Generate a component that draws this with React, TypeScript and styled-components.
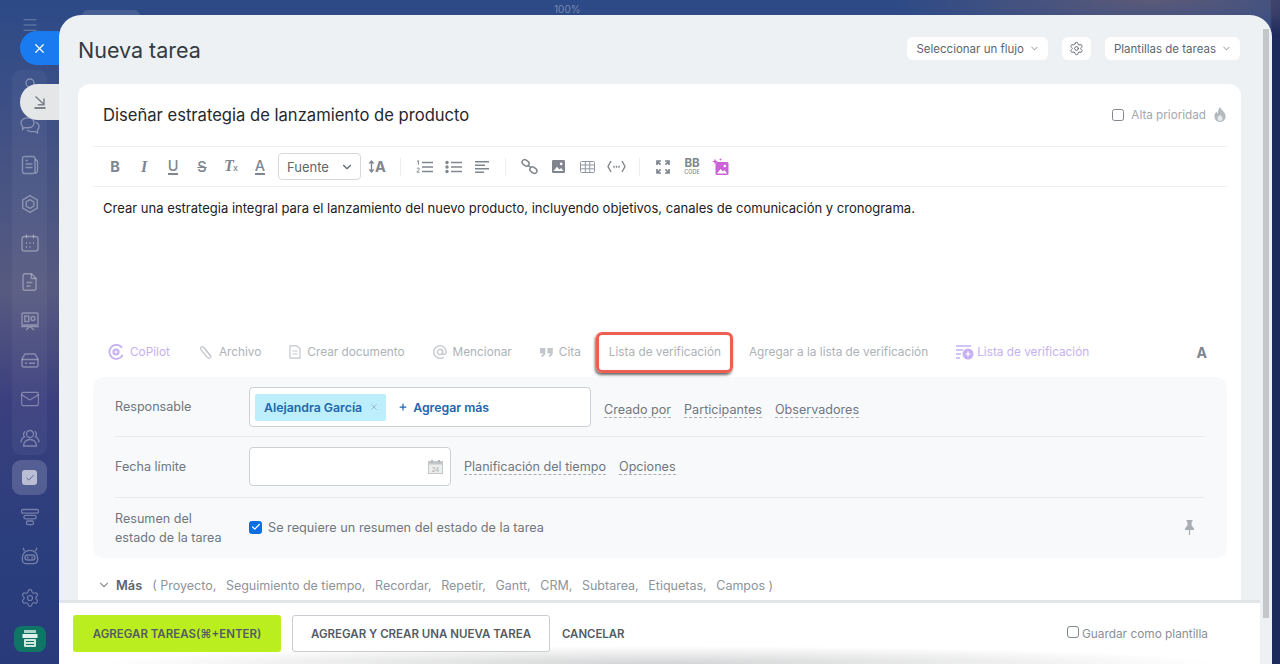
import React from "react";
import styled, { createGlobalStyle, css } from "styled-components";
import { Check, ChevronDown, Mail, Menu, Plus, Settings, X } from "lucide-react";

const GlobalStyle = createGlobalStyle`
  html, body { margin: 0; padding: 0; height: 100%; overflow: hidden; }
  body { font-family: Inter, "Liberation Sans", sans-serif; -webkit-font-smoothing: antialiased; }
  * { box-sizing: border-box; }
`;

const Page = styled.div`
  display: flex;
  width: 1280px;
  height: 664px;
  overflow: hidden;
  background:
    radial-gradient(ellipse 260px 40px at 1150px 0, #5c5a78, transparent),
    linear-gradient(to right, transparent 1270px, #1d2a5c 1272px),
    linear-gradient(#2c4a87 0, #3f5085 120px, #575a80 290px, #3b3f7e 400px, #2b3e7d 540px, #283a7a 664px);
`;

const Sidebar = styled.nav`
  position: relative;
  flex: none;
  display: flex;
  flex-direction: column;
  align-items: center;
  width: 59px;
  padding: 19px 12px 0;
  color: rgba(255, 255, 255, 0.34);
`;

const Burger = styled.div`
  display: flex;
  height: 12px;
  align-items: center;
  margin-bottom: 39px;
`;

const NavGroup = styled.div`
  display: flex;
  flex-direction: column;
  align-items: center;
  gap: 19px;
  width: 35px;
  padding: 7px 0;
  border-radius: 9px;
  background: rgba(255, 255, 255, 0.045);
`;

const NavIcon = styled.div<{ $top?: number }>`
  display: flex;
  align-items: center;
  justify-content: center;
  height: 20px;
  margin-top: ${({ $top }) => $top ?? 0}px;
`;

const ActiveTile = styled.div`
  display: flex;
  align-items: center;
  justify-content: center;
  width: 35px;
  height: 35px;
  margin-top: 5px;
  border-radius: 9px;
  background: rgba(255, 255, 255, 0.17);
`;

const TaskMark = styled.div`
  display: flex;
  align-items: center;
  justify-content: center;
  width: 15px;
  height: 15px;
  border-radius: 3px;
  background: rgba(255, 255, 255, 0.6);
  color: #4b5788;
`;

const AppBadge = styled.div`
  display: flex;
  align-items: center;
  justify-content: center;
  width: 32px;
  height: 26px;
  margin-top: 18px;
  border-radius: 8px;
  background: #0f7565;
`;

const SideTab = styled.div<{ $kind: "close" | "collapse" }>`
  position: absolute;
  left: 20px;
  width: 39px;
  display: flex;
  align-items: center;
  padding-left: 12px;
  border-radius: 18px 0 0 18px;
  ${({ $kind }) =>
    $kind === "close"
      ? css`
          top: 31px;
          height: 34px;
          background: #1a7af0;
          color: #fff;
        `
      : css`
          top: 84px;
          height: 36px;
          background: #e4e6e8;
          color: #7d8389;
        `}
`;

const Main = styled.div`
  flex: 1;
  display: flex;
  flex-direction: column;
  min-width: 0;
  padding-right: 8px;
`;

const TopStrip = styled.div`
  flex: none;
  height: 15px;
  display: flex;
  overflow: hidden;
`;

const GhostTab = styled.div`
  width: 58px;
  height: 10px;
  margin: 10px 0 0 23px;
  border-radius: 6px 6px 0 0;
  background: rgba(255, 255, 255, 0.12);
`;

const Zoom = styled.div`
  margin: 3px 0 0 414px;
  font-size: 10px;
  line-height: 12px;
  color: rgba(255, 255, 255, 0.35);
`;

const Panel = styled.section`
  position: relative;
  flex: 1;
  min-height: 0;
  display: flex;
  flex-direction: column;
  overflow: hidden;
  border-radius: 22px 22px 0 0;
  background: #eef1f4;
`;

const Scrollbar = styled.div`
  position: absolute;
  top: 14px;
  right: 3px;
  width: 6px;
  height: 589px;
  background: #c3c7ca;
`;

const Header = styled.header`
  flex: none;
  height: 69px;
  display: flex;
  align-items: flex-start;
  padding: 22px 32px 0 19px;
`;

const Title = styled.h1`
  flex: 1;
  margin: 0;
  font-size: 21.5px;
  line-height: 26px;
  font-weight: 400;
  color: #333a42;
`;

const HeaderActions = styled.div`
  display: flex;
  gap: 14px;
`;

const Chip = styled.button`
  display: flex;
  align-items: center;
  gap: 5px;
  height: 23px;
  padding: 0 8px 0 9px;
  border: 0;
  border-radius: 6px;
  background: #fff;
  font: inherit;
  font-size: 11.5px;
  color: #5d6670;
`;

const GearChip = styled(Chip)`
  width: 29px;
  padding: 0;
  justify-content: center;
`;

const Body = styled.div`
  flex: 1;
  min-height: 0;
  padding: 0 31px 0 19px;
  overflow: hidden;
`;

const Card = styled.div`
  height: 600px;
  padding: 0 14px 0 15px;
  border-radius: 12px 12px 0 0;
  background: #fff;
`;

const TitleRow = styled.div`
  display: flex;
  align-items: center;
  height: 63px;
  padding: 0 1px 1px 10px;
  border-bottom: 1px solid #edeff1;
`;

const TaskTitle = styled.div`
  flex: 1;
  font-size: 16.6px;
  color: #26292d;
`;

const Priority = styled.label`
  display: flex;
  align-items: center;
  font-size: 11.7px;
  color: #a2a8ae;
`;

const Box = styled.span<{ $checked?: boolean; $size?: number }>`
  flex: none;
  display: inline-flex;
  align-items: center;
  justify-content: center;
  width: ${({ $size }) => $size ?? 12}px;
  height: ${({ $size }) => $size ?? 12}px;
  border-radius: 2.5px;
  border: 1px solid ${({ $checked }) => ($checked ? "#0b6fe0" : "#80868c")};
  background: ${({ $checked }) => ($checked ? "#0b6fe0" : "#fff")};
  color: #fff;
`;

const PriorityText = styled.span`
  margin: 0 8px 0 7px;
`;

const Toolbar = styled.div`
  display: flex;
  align-items: center;
  height: 40px;
  padding-left: 7.5px;
  border-bottom: 1px solid #edeff1;
`;

const Tool = styled.div`
  flex: none;
  display: flex;
  align-items: center;
  justify-content: center;
  width: 29px;
  height: 24px;
  color: #7f868d;
`;

const Glyph = styled.span<{ $italic?: boolean; $under?: boolean; $light?: boolean }>`
  font-size: ${({ $italic }) => ($italic ? 16 : 14.5)}px;
  line-height: 15px;
  font-weight: ${({ $light }) => ($light ? 500 : 700)};
  font-style: ${({ $italic }) => ($italic ? "italic" : "normal")};
  font-family: ${({ $italic }) => ($italic ? '"Liberation Serif", serif' : "inherit")};
  border-bottom: ${({ $under }) => ($under ? "2px solid #7f868d" : "0")};
`;

const Struck = styled(Glyph)`
  text-decoration: line-through;
`;

const Sub = styled.span`
  font-size: 9px;
  font-family: Inter, sans-serif;
  font-style: normal;
  font-weight: 500;
  margin-left: -1px;
`;

const FontSelect = styled.div`
  flex: none;
  display: flex;
  align-items: center;
  justify-content: space-between;
  width: 83px;
  height: 27px;
  margin-left: 3.5px;
  margin-right: 1.5px;
  padding: 0 6px 0 8px;
  border: 1px solid #d5d9dd;
  border-radius: 4px;
  font-size: 13px;
  color: #5f666d;
`;

const ToolDivider = styled.div`
  flex: none;
  width: 1px;
  height: 18px;
  margin: 0 8.5px;
  background: #eceef0;
`;

const BBCode = styled.div`
  display: flex;
  flex-direction: column;
  align-items: center;
  font-size: 11.5px;
  line-height: 11px;
  font-weight: 700;
  color: #7f868d;
`;

const BBSmall = styled.span`
  font-size: 5.5px;
  line-height: 7px;
  font-weight: 500;
`;

const Editor = styled.p`
  height: 140px;
  margin: 0;
  padding: 13px 10px 0;
  font-size: 13.03px;
  line-height: 16px;
  color: #1d2024;
`;

const Actions = styled.div`
  display: flex;
  align-items: center;
  gap: 28px;
  height: 50px;
  padding: 0 20px 0 15px;
  font-size: 11.8px;
  color: #adb2b7;
`;

const Action = styled.div<{ $purple?: boolean; $marked?: boolean; $gap?: number }>`
  position: relative;
  display: flex;
  align-items: center;
  gap: ${({ $gap }) => $gap ?? 6}px;
  white-space: nowrap;
  color: ${({ $purple }) => ($purple ? "#c6b0f2" : "#adb2b7")};
  ${({ $marked }) =>
    $marked &&
    css`
      &::after {
        content: "";
        position: absolute;
        inset: -13px -12px -14px -13px;
        border: 3.5px solid #ee5f53;
        border-radius: 6px;
        box-shadow: -1px 2px 3px rgba(0, 0, 0, 0.6), inset 0 0 1px rgba(0, 0, 0, 0.2);
      }
    `}
`;

const FontToggle = styled.div`
  margin-left: auto;
  font-size: 14px;
  font-weight: 700;
  color: #7f868d;
`;

const Fields = styled.div`
  display: flex;
  flex-direction: column;
  height: 181px;
  padding: 0 23px 0 22px;
  border-radius: 10px;
  background: #f8f9fb;
  font-size: 12.6px;
  color: #6f777f;
`;

const FieldRow = styled.div<{ $height: number; $top: number }>`
  display: flex;
  align-items: flex-start;
  height: ${({ $height }) => $height}px;
  padding-top: ${({ $top }) => $top}px;
  border-bottom: 1px solid #e8eaec;
  &:last-child {
    border-bottom: 0;
  }
`;

const FieldLabel = styled.div<{ $tall?: boolean }>`
  flex: none;
  width: 134px;
  padding-top: ${({ $tall }) => ($tall ? 1 : 0)}px;
  line-height: ${({ $tall }) => ($tall ? "19px" : "40px")};
`;

const InputBox = styled.div<{ $wide?: boolean }>`
  flex: none;
  display: flex;
  align-items: center;
  justify-content: ${({ $wide }) => ($wide ? "flex-start" : "flex-end")};
  width: ${({ $wide }) => ($wide ? 342 : 202)}px;
  height: ${({ $wide }) => ($wide ? 40 : 39)}px;
  padding: 0 7px 0 5px;
  border: 1px solid #ccd1d6;
  border-radius: 4px;
  background: #fff;
`;

const Person = styled.div`
  display: flex;
  align-items: center;
  gap: 7px;
  height: 27px;
  padding: 0 7px 0 9px;
  border-radius: 2px;
  background: #bdeefb;
  font-weight: 600;
  font-size: 12.3px;
  color: #2067ad;
`;

const AddMore = styled.div`
  display: flex;
  align-items: center;
  gap: 5px;
  margin-left: 12px;
  font-weight: 600;
  font-size: 12.3px;
  color: #2067ad;
`;

const FieldLinks = styled.div<{ $top: number }>`
  display: flex;
  gap: 13px;
  margin: ${({ $top }) => $top}px 0 0 13px;
`;

const DashLink = styled.span`
  line-height: 15px;
  border-bottom: 1px dashed #a9aeb4;
  white-space: nowrap;
`;

const SummaryCheck = styled.div`
  flex: 1;
  display: flex;
  align-items: center;
  gap: 6px;
  height: 38px;
  padding-right: 10px;
`;

const SummaryText = styled.span`
  flex: 1;
  font-size: 12.7px;
`;

const More = styled.div`
  display: flex;
  align-items: center;
  height: 54px;
  padding-left: 4px;
  font-size: 12.5px;
  color: #8d949b;
`;

const MoreLabel = styled.b`
  margin: 0 10px 0 5px;
  font-size: 12.8px;
  font-weight: 600;
  color: #5d656d;
`;

const MoreItem = styled.span`
  margin-right: 9.6px;
`;

const Footer = styled.footer`
  flex: none;
  display: flex;
  align-items: center;
  height: 64px;
  margin-right: 12px;
  padding: 0 52px 0 14px;
  border-top: 3px solid #e2e5e7;
  background: radial-gradient(ellipse 560px 18px at 50% 100%, #d3d4d5, #fff);
`;

const FooterButton = styled.button<{ $primary?: boolean }>`
  display: flex;
  align-items: center;
  justify-content: center;
  height: 37px;
  width: ${({ $primary }) => ($primary ? 208 : 258)}px;
  margin-right: 11px;
  border: ${({ $primary }) => ($primary ? "0" : "1px solid #c9cdd1")};
  border-radius: 3px;
  background: ${({ $primary }) => ($primary ? "#bbee1e" : "#fff")};
  font: inherit;
  font-size: 11.5px;
  font-weight: 600;
  color: #535c64;
`;

const CancelLink = styled.span`
  margin-left: 1px;
  font-size: 11.4px;
  font-weight: 600;
  color: #535c64;
`;

const SaveTemplate = styled.label`
  display: flex;
  align-items: center;
  gap: 3px;
  margin-left: auto;
  font-size: 11.85px;
  color: #888f96;
  ${Box} {
    margin-top: -4px;
    border-radius: 3px;
  }
`;

const Ghost = () => (
  <svg width="20" height="20" viewBox="0 0 20 20" fill="none" stroke="currentColor" strokeWidth="1.4">
    <circle cx="10" cy="6" r="4" />
    <path d="M4 18c0-4 2-7 6-7s6 3 6 7z" />
  </svg>
);

const Chat = () => (
  <svg width="20" height="20" viewBox="0 0 20 20" fill="none" stroke="currentColor" strokeWidth="1.4">
    <path d="M8 1.8c3.5 0 6 2.2 6 5s-2.5 5-6 5H4l-1.4 1.6v-3C1.5 9.4 1 8.2 1 6.8c0-2.8 3-5 7-5z" />
    <path d="M15.4 6.2c2.1.7 3.6 2.4 3.6 4.4 0 1.3-.5 2.3-1.5 3.2v3.2l-2.1-1.4H11c-1.5 0-2.8-.6-3.7-1.5" />
  </svg>
);

const Feed = () => (
  <svg width="20" height="20" viewBox="0 0 20 20" fill="none" stroke="currentColor" strokeWidth="1.4">
    <rect x="2.5" y="1.5" width="12.5" height="17" rx="2" />
    <path d="M15 4.5c1.5.3 2.5 1 2.500 2.500v8.500c0 1.500-1 2.500-2.500 2.700" />
    <path d="M5.500 5.500h2.500M5.500 9h7M5.500 12.500h7" strokeWidth="1.5" />
  </svg>
);

const Hexagon = () => (
  <svg width="20" height="20" viewBox="0 0 20 20" fill="none" stroke="currentColor" strokeWidth="1.4">
    <path d="M10 1.6 17.3 5.8v8.4L10 18.4 2.7 14.2V5.8z" />
    <path d="M10 5.6 13.8 7.8v4.4L10 14.4 6.2 12.2V7.8z" />
  </svg>
);

const CalendarDots = () => (
  <svg width="20" height="20" viewBox="0 0 20 20" fill="none" stroke="currentColor" strokeWidth="1.4">
    <rect x="2" y="3.5" width="16" height="14.5" rx="2.5" />
    <path d="M6.5 1.5v4M13.5 1.5v4" />
    <path d="M6 10h1M9.500 10h1M13 10h1M6 14h1M9.500 14h1" strokeWidth="1.8" />
  </svg>
);

const PageIcon = () => (
  <svg width="20" height="20" viewBox="0 0 20 20" fill="none" stroke="currentColor" strokeWidth="1.4">
    <path d="M5 1.8h6.5L16 6.300v10a2 2 0 0 1-2 2H5a2 2 0 0 1-2-2V3.800a2 2 0 0 1 2-2z" />
    <path d="M11.300 2v4.500H16M6.500 10.500h6M6.500 14h4" />
  </svg>
);

const Board = () => (
  <svg width="20" height="20" viewBox="0 0 20 20" fill="none" stroke="currentColor" strokeWidth="1.4">
    <rect x="2" y="2" width="16" height="12" rx="1" />
    <rect x="4.8" y="5" width="4" height="5.5" />
    <circle cx="13" cy="7.5" r="2" />
    <path d="M1 15.500h18M10 15.500l-4 3.500M10 15.500l4 3.500" />
  </svg>
);

const Drive = () => (
  <svg width="20" height="18" viewBox="0 0 20 18" fill="none" stroke="currentColor" strokeWidth="1.4">
    <path d="M5 3h10l3 5v6a2 2 0 0 1-2 2H4a2 2 0 0 1-2-2V8z" />
    <path d="M2 8.5h16M5 12.2h2M9 12.2h6" />
  </svg>
);

const Team = () => (
  <svg width="20" height="20" viewBox="0 0 20 20" fill="none" stroke="currentColor" strokeWidth="1.3">
    <circle cx="10" cy="6" r="3.5" />
    <path d="M3.5 18c0-3.800 2.800-6.500 6.500-6.500s6.500 2.700 6.500 6.500z" />
    <path d="M5.300 3.500C3.500 4 2.800 7 4.500 8.800 2.300 9.800 1 12 1 14.500M14.700 3.500c1.800.5 2.500 3.500.8 5.300 2.200 1 3.500 3.200 3.500 5.700" />
  </svg>
);

const Funnel = () => (
  <svg width="20" height="18" viewBox="0 0 20 18" fill="none" stroke="currentColor" strokeWidth="1.3">
    <rect x="1.5" y="1.5" width="17" height="3.6" rx="1.4" />
    <rect x="4" y="7.3" width="12" height="3.6" rx="1.4" />
    <rect x="6.5" y="13" width="7" height="3.6" rx="1.4" />
  </svg>
);

const BotFace = () => (
  <svg width="20" height="20" viewBox="0 0 20 20" fill="none" stroke="currentColor" strokeWidth="1.4">
    <path d="M4.500 5 3 1.800M15.500 5 17 1.800" />
    <path d="M10 4.400c4.600 0 7.600 3 7.600 7V14a3.600 3.600 0 0 1-3.600 3.600H6A3.600 3.600 0 0 1 2.400 14v-2.600c0-4 3-7 7.600-7z" />
    <rect x="5" y="9" width="10" height="5" rx="2.5" />
    <path d="M7.800 11.500h.1M12.100 11.500h.1" strokeWidth="1.8" strokeLinecap="round" />
  </svg>
);

const Collapse = () => (
  <svg width="16" height="16" viewBox="0 0 16 16" fill="none" stroke="currentColor" strokeWidth="1.5">
    <path d="M3.500 2.500 12 10.500M12 4.500v6.200H5.800" />
    <path d="M2.500 14h11" strokeWidth="2" />
  </svg>
);

const StoreBadge = () => (
  <svg width="18" height="20" viewBox="0 0 18 20">
    <rect x="3" y="1" width="12" height="3" fill="#a9d6ca" />
    <rect x="1.5" y="5" width="15" height="4" fill="#e4f2ee" />
    <rect x="3" y="10" width="12" height="8" rx="1" fill="#cfe6df" />
    <path d="M5 12.500h8M5 15.500h8" stroke="#0f7565" strokeWidth="1" />
  </svg>
);

const SizeArrow = () => (
  <svg width="7" height="13" viewBox="0 0 7 13" fill="#7f868d">
    <path d="M3.500 0 6.600 3.400H.4zM3.500 13 .4 9.600h6.200z" />
    <rect x="2.8" y="3" width="1.4" height="7" />
  </svg>
);

const OrderedList = () => (
  <svg width="17" height="14" viewBox="0 0 17 14" fill="none" stroke="#7f868d">
    <path d="M6 2.500h11M6 7h11M6 11.500h11" strokeWidth="1.6" />
    <path d="M1 1.400 2.400.6v4.200M.8 8.800c.4-1 2.700-1 2.600.3 0 1-1.800 1.600-2.600 3h2.800" strokeWidth="1" />
  </svg>
);

const BulletList = () => (
  <svg width="17" height="14" viewBox="0 0 17 14" fill="#7f868d">
    <circle cx="2" cy="2.5" r="1.7" />
    <circle cx="2" cy="7" r="1.7" />
    <circle cx="2" cy="11.5" r="1.7" />
    <path d="M6 1.700h11v1.600H6zM6 6.200h11v1.600H6zM6 10.700h11v1.600H6z" />
  </svg>
);

const AlignLeft = () => (
  <svg width="15" height="14" viewBox="0 0 15 14" fill="#7f868d">
    <path d="M0 1h14v1.500H0zM0 4.500h10V6H0zM0 8h14v1.500H0zM0 11.500h9V13H0z" />
  </svg>
);

const ChainLink = () => (
  <svg width="17" height="17" viewBox="0 0 17 17" fill="none" stroke="#7f868d" strokeWidth="1.5">
    <rect x=".9" y="2.2" width="7.4" height="5.2" rx="2.6" transform="rotate(35 4.6 4.8)" />
    <rect x="8.7" y="9.6" width="7.4" height="5.2" rx="2.6" transform="rotate(35 12.4 12.2)" />
    <path d="M7 7.400 10 9.600" />
  </svg>
);

const ImageIcon = () => (
  <svg width="13" height="13" viewBox="0 0 13 13">
    <rect width="13" height="13" rx="1.2" fill="#7f868d" />
    <path d="M1.500 11 5 6.800l2.400 2.600 1.700-1.500 2.400 3.100z" fill="#fff" />
    <circle cx="9.2" cy="3.9" r="1.3" fill="#fff" />
  </svg>
);

const TableIcon = () => (
  <svg width="15" height="12" viewBox="0 0 15 12" fill="none" stroke="#9197a0">
    <rect x=".5" y=".5" width="14" height="11" rx="1" />
    <path d="M.5 4h14M.5 7.800h14M5.300 .5v11M9.800.5v11" />
  </svg>
);

const CodeIcon = () => (
  <svg width="19" height="13" viewBox="0 0 19 13" fill="none" stroke="#7f868d" strokeWidth="1.4">
    <path d="M4 1 1 6.500 4 12M15 1l3 5.500L15 12" />
    <path d="M6.300 6.700h1.400M8.800 6.700h1.400M11.300 6.700h1.400" strokeWidth="2" />
  </svg>
);

const FullScreen = () => (
  <svg width="14" height="14" viewBox="0 0 14 14" fill="none" stroke="#7f868d" strokeWidth="1.7">
    <path d="M1 5V1h4M1 1l3.600 3.600M9 1h4v4M13 1 9.400 4.600M1 9v4h4M1 13l3.600-3.600M13 9v4H9M13 13 9.400 9.400" />
  </svg>
);

const MagicImage = () => (
  <svg width="18" height="18" viewBox="0 0 18 18">
    <rect x="3.5" y="4" width="13" height="13" rx="1.5" fill="#cb62d8" />
    <path d="M5 15.500 8.600 11l2.300 2.500 1.700-1.400 2.400 3.400z" fill="#fff" />
    <circle cx="12.8" cy="8" r="1.3" fill="#fff" />
    <path d="M3 .5l.8 2.200L6 3.500l-2.200.8L3 6.500l-.8-2.200L0 3.500l2.200-.8zM8.500 0l.4 1.100L10 1.500l-1.100.4-.4 1.100-.4-1.100L7 1.500l1.100-.4z" fill="#cb62d8" />
  </svg>
);

const CoPilotIcon = () => (
  <svg width="16" height="16" viewBox="0 0 16 16" fill="none" stroke="#c6b0f2" strokeWidth="1.8">
    <path d="M14 3.600A7 7 0 1 0 14.600 11" />
    <circle cx="8" cy="8" r="3.6" fill="#c6b0f2" stroke="none" />
    <path d="M8 6.400v3.200M6.400 8h3.200" stroke="#fff" strokeWidth="1" />
  </svg>
);

const Clip = () => (
  <svg width="15" height="16" viewBox="0 0 15 16" fill="none" stroke="#c3c7cb" strokeWidth="1.3">
    <path d="M13 12.600 5.600 3.500C4.200 1.700 1.600 3.200 2.800 5.400l6.400 8c1.800 2 4.600.2 3.200-2L6.600 4.200" />
  </svg>
);

const DocIcon = () => (
  <svg width="12" height="14" viewBox="0 0 12 14" fill="none" stroke="#c3c7cb" strokeWidth="1.2">
    <path d="M1 .8h7l3 3v9.400H1z" />
    <path d="M3.500 6h5M3.500 9h5" />
  </svg>
);

const AtIcon = () => (
  <svg width="14" height="14" viewBox="0 0 14 14" fill="none" stroke="#c3c7cb" strokeWidth="1.3">
    <circle cx="7" cy="7" r="2.6" />
    <path d="M9.600 4.400v3.800c0 1.800 3.700 1.500 3.700-1.200A6.300 6.300 0 1 0 10.600 12.200" />
  </svg>
);

const QuoteIcon = () => (
  <svg width="13" height="9" viewBox="0 0 13 9" fill="#c3c7cb">
    <path d="M0 0h5.400v4.400C5.400 7 4 8.400 1.600 9L1 7.600c1.200-.4 1.800-1 1.800-2.200H0zM7.400 0h5.400v4.400c0 2.600-1.400 4-3.800 4.600l-.6-1.400c1.200-.4 1.800-1 1.800-2.200H7.400z" />
  </svg>
);

const ChecklistIcon = () => (
  <svg width="18" height="15" viewBox="0 0 18 15" fill="none" stroke="#c6b0f2" strokeWidth="1.5">
    <path d="M0 1h15M0 5h7M0 9h5M0 13h4" />
    <circle cx="12" cy="9" r="5.5" fill="#c6b0f2" stroke="none" />
    <path d="M12 6.500v5M9.500 9h5" stroke="#fff" strokeWidth="1.2" />
  </svg>
);

const Flame = () => (
  <svg width="12" height="15" viewBox="0 0 12 15">
    <path d="M6 0c.6 2.600 5.600 5 5.600 9.200A5.500 5.500 0 0 1 6 15 5.500 5.500 0 0 1 .4 9.200C.4 7 1.600 5.800 2.600 4.600c.3 1 .7 1.600 1.300 1.900C3.800 4 4.800 1.600 6 0z" fill="#b4b9be" />
    <path d="M6 7.600c.5 1.200 2.600 2.200 2.600 3.900A2.600 2.600 0 0 1 6 14a2.600 2.600 0 0 1-2.600-2.500C3.400 9.800 5.400 9 6 7.600z" fill="#e6e8ea" />
  </svg>
);

const Pin = () => (
  <svg width="9" height="15" viewBox="0 0 9 15" fill="#a9aeb2">
    <path d="M1.500 0h6v1.500L6.600 2v3.600L9 8.400V10H0V8.400l2.400-2.800V2l-.9-.5z" />
    <rect x="3.9" y="10" width="1.2" height="5" />
  </svg>
);

const CalendarDay = () => (
  <svg width="15" height="14" viewBox="0 0 15 14">
    <rect x=".5" y="1.5" width="14" height="12" fill="#eceded" stroke="#c4c7c9" />
    <rect x=".5" y="1.5" width="14" height="3" fill="#c4c7c9" />
    <rect x="3" y="0" width="2" height="3" fill="#b4b7ba" />
    <rect x="10" y="0" width="2" height="3" fill="#b4b7ba" />
    <text x="7.5" y="11.5" fontSize="6" textAnchor="middle" fill="#a9acaf" fontFamily="Inter, sans-serif">24</text>
  </svg>
);

const moreItems = [
  "( Proyecto,",
  "Seguimiento de tiempo,",
  "Recordar,",
  "Repetir,",
  "Gantt,",
  "CRM,",
  "Subtarea,",
  "Etiquetas,",
  "Campos )",
];

const navIcons = [
  <Ghost key="ghost" />,
  <Chat key="chat" />,
  <Feed key="feed" />,
  <Hexagon key="hex" />,
  <CalendarDots key="cal" />,
  <PageIcon key="file" />,
  <Board key="board" />,
  <Drive key="drive" />,
  <Mail key="mail" size={20} strokeWidth={1.4} />,
  <Team key="users" />,
];

export default function App() {
  return (
    <Page>
      <GlobalStyle />
      <Sidebar>
        <Burger>
          <Menu size={18} strokeWidth={1.2} />
        </Burger>
        <NavGroup>
          {navIcons.map((icon) => (
            <NavIcon key={icon.key}>{icon}</NavIcon>
          ))}
        </NavGroup>
        <ActiveTile>
          <TaskMark>
            <Check size={10} strokeWidth={2} />
          </TaskMark>
        </ActiveTile>
        <NavIcon $top={12}>
          <Funnel />
        </NavIcon>
        <NavIcon $top={19}>
          <BotFace />
        </NavIcon>
        <NavIcon $top={22}>
          <Settings size={20} strokeWidth={1.4} />
        </NavIcon>
        <AppBadge>
          <StoreBadge />
        </AppBadge>
        <SideTab $kind="close">
          <X size={15} strokeWidth={2} />
        </SideTab>
        <SideTab $kind="collapse">
          <Collapse />
        </SideTab>
      </Sidebar>

      <Main>
        <TopStrip>
          <GhostTab />
          <Zoom>100%</Zoom>
        </TopStrip>
        <Panel>
          <Scrollbar />
          <Header>
            <Title>Nueva tarea</Title>
            <HeaderActions>
              <Chip>
                Seleccionar un flujo <ChevronDown size={11} strokeWidth={1.5} />
              </Chip>
              <GearChip>
                <Settings size={15} strokeWidth={1.5} />
              </GearChip>
              <Chip>
                Plantillas de tareas <ChevronDown size={11} strokeWidth={1.5} />
              </Chip>
            </HeaderActions>
          </Header>

          <Body>
            <Card>
              <TitleRow>
                <TaskTitle>Diseñar estrategia de lanzamiento de producto</TaskTitle>
                <Priority>
                  <Box />
                  <PriorityText>Alta prioridad</PriorityText>
                  <Flame />
                </Priority>
              </TitleRow>

              <Toolbar>
                <Tool><Glyph>B</Glyph></Tool>
                <Tool><Glyph $italic>I</Glyph></Tool>
                <Tool><Glyph $under $light>U</Glyph></Tool>
                <Tool><Struck $light>S</Struck></Tool>
                <Tool><Glyph $italic>T<Sub>x</Sub></Glyph></Tool>
                <Tool><Glyph $under $light>A</Glyph></Tool>
                <FontSelect>
                  Fuente <ChevronDown size={14} strokeWidth={2} />
                </FontSelect>
                <Tool><SizeArrow /><Glyph>A</Glyph></Tool>
                <ToolDivider />
                <Tool><OrderedList /></Tool>
                <Tool><BulletList /></Tool>
                <Tool><AlignLeft /></Tool>
                <ToolDivider />
                <Tool><ChainLink /></Tool>
                <Tool><ImageIcon /></Tool>
                <Tool><TableIcon /></Tool>
                <Tool><CodeIcon /></Tool>
                <ToolDivider />
                <Tool><FullScreen /></Tool>
                <Tool>
                  <BBCode>
                    BB
                    <BBSmall>CODE</BBSmall>
                  </BBCode>
                </Tool>
                <Tool><MagicImage /></Tool>
              </Toolbar>

              <Editor>
                Crear una estrategia integral para el lanzamiento del nuevo producto, incluyendo objetivos, canales de comunicación y cronograma.
              </Editor>

              <Actions>
                <Action $purple><CoPilotIcon />CoPilot</Action>
                <Action><Clip />Archivo</Action>
                <Action><DocIcon />Crear documento</Action>
                <Action><AtIcon />Mencionar</Action>
                <Action><QuoteIcon />Cita</Action>
                <Action $marked>Lista de verificación</Action>
                <Action>Agregar a la lista de verificación</Action>
                <Action $purple $gap={3}><ChecklistIcon />Lista de verificación</Action>
                <FontToggle>A</FontToggle>
              </Actions>

              <Fields>
                <FieldRow $height={60} $top={10}>
                  <FieldLabel>Responsable</FieldLabel>
                  <InputBox $wide>
                    <Person>
                      Alejandra García <X size={10} strokeWidth={1.6} color="#8aa4b4" />
                    </Person>
                    <AddMore>
                      <Plus size={10} strokeWidth={3} /> Agregar más
                    </AddMore>
                  </InputBox>
                  <FieldLinks $top={15}>
                    <DashLink>Creado por</DashLink>
                    <DashLink>Participantes</DashLink>
                    <DashLink>Observadores</DashLink>
                  </FieldLinks>
                </FieldRow>
                <FieldRow $height={61} $top={10}>
                  <FieldLabel>Fecha límite</FieldLabel>
                  <InputBox>
                    <CalendarDay />
                  </InputBox>
                  <FieldLinks $top={12}>
                    <DashLink>Planificación del tiempo</DashLink>
                    <DashLink>Opciones</DashLink>
                  </FieldLinks>
                </FieldRow>
                <FieldRow $height={60} $top={10}>
                  <FieldLabel $tall>
                    Resumen del
                    <br />
                    estado de la tarea
                  </FieldLabel>
                  <SummaryCheck>
                    <Box $checked $size={13}>
                      <Check size={10} strokeWidth={3} />
                    </Box>
                    <SummaryText>Se requiere un resumen del estado de la tarea</SummaryText>
                    <Pin />
                  </SummaryCheck>
                </FieldRow>
              </Fields>

              <More>
                <ChevronDown size={14} strokeWidth={2} color="#8d949b" />
                <MoreLabel>Más</MoreLabel>
                {moreItems.map((item) => (
                  <MoreItem key={item}>{item}</MoreItem>
                ))}
              </More>
            </Card>
          </Body>

          <Footer>
            <FooterButton $primary>AGREGAR TAREAS(⌘+ENTER)</FooterButton>
            <FooterButton>AGREGAR Y CREAR UNA NUEVA TAREA</FooterButton>
            <CancelLink>CANCELAR</CancelLink>
            <SaveTemplate>
              <Box $size={12} />
              Guardar como plantilla
            </SaveTemplate>
          </Footer>
        </Panel>
      </Main>
    </Page>
  );
}
